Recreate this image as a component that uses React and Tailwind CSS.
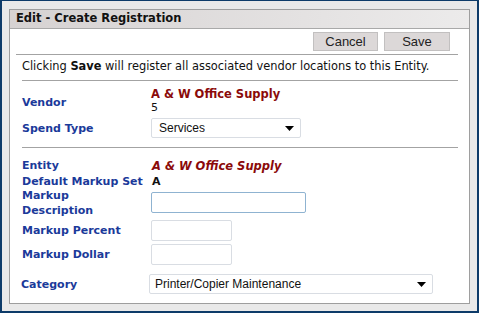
const label = "text-[11px] font-bold text-[#1b3a9a] leading-[13px]";

function Caret() {
  return (
    <svg width="9" height="5" viewBox="0 0 9 5" className="shrink-0">
      <path d="M0 0h9L4.5 5z" fill="#000" />
    </svg>
  );
}

export default function App() {
  return (
    <div className="w-[479px] h-[313px] bg-[#e9e9e9] border-[#0d3b69] border-t border-x-2 border-b-2 pt-[8px] px-[7px] pb-[7px] font-['DejaVu_Sans',Verdana,sans-serif]">
      <div className="h-full border border-[#9e9e9e] bg-white overflow-hidden">
        <div className="h-[19px] border-b border-[#a9a9a9] bg-gradient-to-r from-[#d6d2d2] to-[#ecebeb] pl-[6px] flex items-center">
          <span className="text-[11.5px] font-bold text-[#111] leading-none">Edit - Create Registration</span>
        </div>

        <div className="ml-[6px] mr-[11px] border-b border-[#a3a3a3] flex justify-end gap-[6px] pt-[3px] pb-[3px] pr-[8px]">
          <button className="w-[65px] h-[19px] bg-[#dcd8d8] border border-[#c2c0c0] text-[13px] text-[#222] font-['Liberation_Sans',Arial,sans-serif] leading-none">Cancel</button>
          <button className="w-[66px] h-[19px] bg-[#dcd8d8] border border-[#c2c0c0] text-[13px] text-[#222] font-['Liberation_Sans',Arial,sans-serif] leading-none">Save</button>
        </div>

        <p className="px-[12px] pt-[5px] pb-[7px] text-[11.4px] leading-[13px] text-[#111]">
          Clicking <b>Save</b> will register all associated vendor locations to this Entity.
        </p>

        <div className="ml-[12px] mr-[11px] border-y border-[#a3a3a3] pt-[6px] pb-[9px]">
          <div className="flex items-center">
            <div className={`${label} w-[129px] pt-[3px]`}>Vendor</div>
            <div className="flex flex-col">
              <span className="text-[11.5px] font-bold text-[#8b0a0a] leading-[14px]">A &amp; W Office Supply</span>
              <span className="text-[11px] text-[#111] leading-[13px]">5</span>
            </div>
          </div>
          <div className="flex items-center mt-[4px]">
            <div className={`${label} w-[129px]`}>Spend Type</div>
            <div className="w-[150px] h-[20px] border border-[#d9dde3] rounded-[2px] flex items-center justify-between pl-[7px] pr-[6px] text-[12px] text-[#111] font-['Liberation_Sans',Arial,sans-serif]">
              <span>Services</span>
              <Caret />
            </div>
          </div>
        </div>

        <div className="ml-[12px] pt-[9px]">
          <div className="flex items-center h-[17px]">
            <div className={`${label} w-[130px]`}>Entity</div>
            <span className="text-[11.5px] font-bold italic text-[#8b0a0a] leading-[14px]">A &amp; W Office Supply</span>
          </div>
          <div className="flex items-center h-[14px]">
            <div className={`${label} w-[130px]`}>Default Markup Set</div>
            <span className="text-[11px] font-bold text-[#111] leading-[13px]">A</span>
          </div>
          <div className="flex items-center h-[29px]">
            <div className={`${label} w-[129px] leading-[15px]`}>Markup<br />Description</div>
            <div className="w-[155px] h-[21px] border border-[#8fb3d1] rounded-[2px]"></div>
          </div>
          <div className="flex items-center mt-[3px]">
            <div className={`${label} w-[129px]`}>Markup Percent</div>
            <div className="w-[81px] h-[21px] border border-[#d9dde3] rounded-[2px]"></div>
          </div>
          <div className="flex items-center mt-[3px]">
            <div className={`${label} w-[129px]`}>Markup Dollar</div>
            <div className="w-[81px] h-[21px] border border-[#d9dde3] rounded-[2px]"></div>
          </div>
          <div className="flex items-center mt-[9px] -ml-[1px]">
            <div className={`${label} w-[128px]`}>Category</div>
            <div className="w-[284px] h-[20px] border border-[#d9dde3] rounded-[2px] flex items-center justify-between pl-[5px] pr-[6px] text-[12px] text-[#111] font-['Liberation_Sans',Arial,sans-serif]">
              <span>Printer/Copier Maintenance</span>
              <Caret />
            </div>
          </div>
        </div>
      </div>
    </div>
  );
}
